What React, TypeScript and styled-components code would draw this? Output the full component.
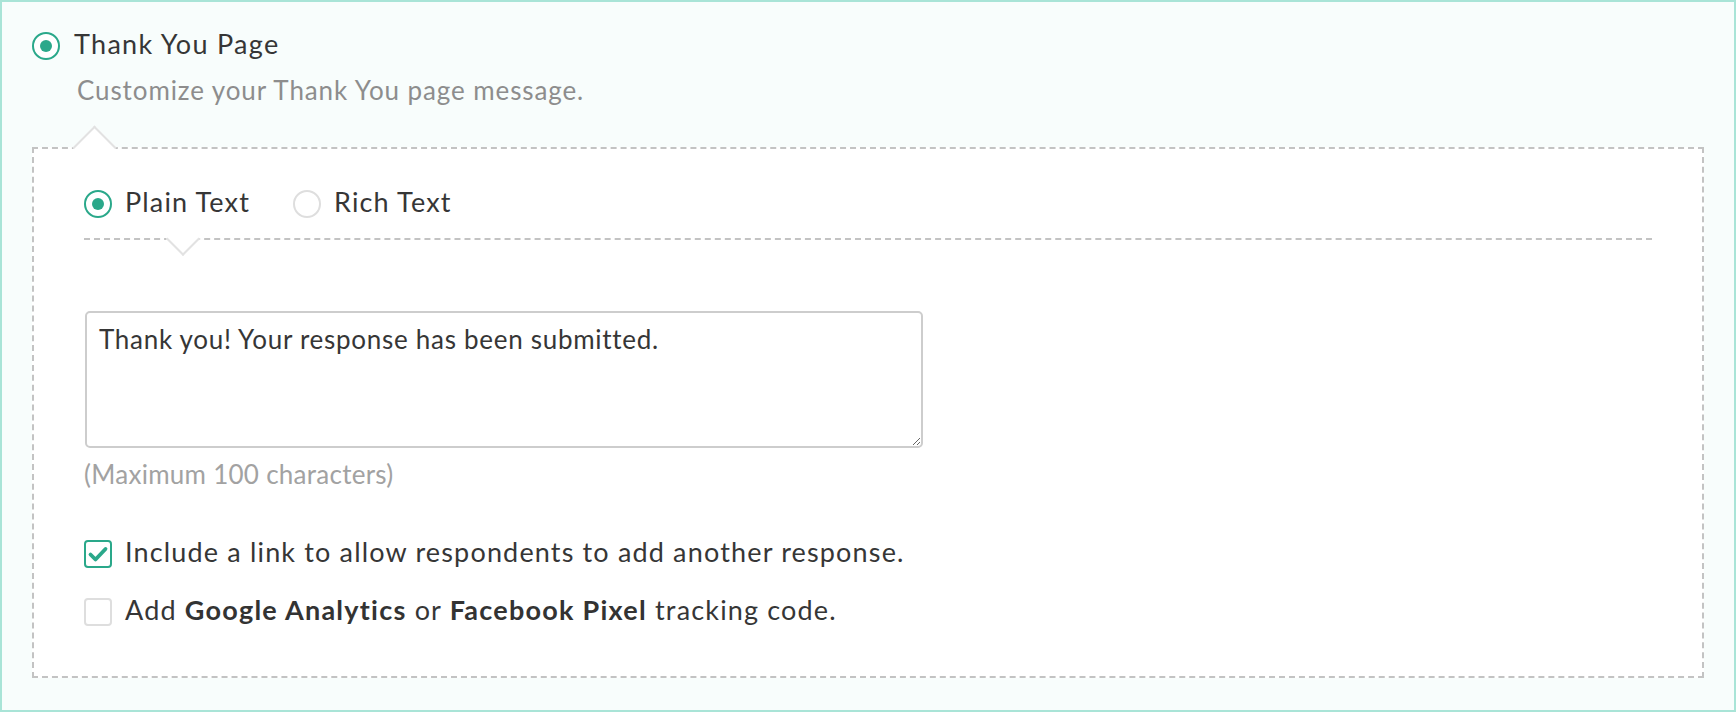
import React from "react";
import styled, { createGlobalStyle } from "styled-components";

const TEAL = "#2aa88a";
const TEXT = "#363636";

const Global = createGlobalStyle`
  html, body { margin: 0; padding: 0; background: #ffffff; }
  body { font-family: Lato, "Open Sans", sans-serif; color: ${TEXT}; }
  *, *::before, *::after { box-sizing: border-box; }
`;

const Panel = styled.section`
  width: 1736px;
  height: 712px;
  border: 2px solid #a9e4d7;
  background: #f8fdfc;
  padding: 30px 30px 30px 30px;
  display: flex;
  flex-direction: column;
`;

const OptionRow = styled.label<{ $gap?: number }>`
  display: inline-flex;
  align-items: center;
  gap: ${(p) => p.$gap ?? 13}px;
  height: 28px;
  cursor: pointer;
`;

const Label = styled.span<{ $spacing?: number }>`
  font-size: 27px;
  letter-spacing: ${(p) => p.$spacing ?? 1.16}px;
  line-height: 28px;
  padding-bottom: 4px;
  color: ${TEXT};
  white-space: nowrap;
  b { font-weight: 700; color: #333; letter-spacing: 1.25px; }
`;

const Radio = styled.span<{ $checked?: boolean }>`
  flex: none;
  width: 28px;
  height: 28px;
  border-radius: 50%;
  border: 2px solid ${(p) => (p.$checked ? TEAL : "#dedede")};
  background: #fff;
  display: inline-flex;
  align-items: center;
  justify-content: center;
  &::after {
    content: "";
    width: 12px;
    height: 12px;
    border-radius: 50%;
    background: ${(p) => (p.$checked ? TEAL : "transparent")};
  }
`;

const Subtitle = styled.p`
  margin: 14px 0 0 45px;
  font-size: 26px;
  letter-spacing: 0.9px;
  line-height: 32px;
  color: #8d8d8d;
`;

const DashedBox = styled.div`
  position: relative;
  margin-top: 41px;
  border: 2px dashed #c3c3c3;
  background: #ffffff;
  padding: 0 50px 50px;
`;

const UpNotch = styled.span`
  position: absolute;
  left: 45px;
  top: -17px;
  width: 31px;
  height: 31px;
  background: #ffffff;
  border-top: 2px solid #e2e2e2;
  border-left: 2px solid #e2e2e2;
  transform: rotate(45deg);
`;

const TabRow = styled.div`
  position: relative;
  display: flex;
  align-items: center;
  gap: 43px;
  padding: 41px 0 20px;
  border-bottom: 2px dashed #c3c3c3;
`;

const DownNotch = styled.span`
  position: absolute;
  left: 87px;
  top: calc(100% - 11px);
  width: 24px;
  height: 24px;
  background: #ffffff;
  border-right: 2px solid #e2e2e2;
  border-bottom: 2px solid #e2e2e2;
  transform: rotate(45deg);
`;

const Body = styled.div`
  padding-top: 71px;
  display: flex;
  flex-direction: column;
`;

const MessageInput = styled.textarea`
  width: 838px;
  height: 137px;
  margin: 0 0 0 1px;
  border: 2px solid #cdcdcd;
  border-radius: 5px;
  padding: 10px 12px;
  font-family: Lato, "Open Sans", sans-serif;
  font-size: 26px;
  letter-spacing: 0.72px;
  line-height: 32px;
  color: ${TEXT};
  background: #fff;
  outline: none;
  resize: both;
  display: block;
`;

const Hint = styled.div`
  margin-top: 10px;
  font-size: 26px;
  letter-spacing: 0.27px;
  line-height: 32px;
  color: #a2a2a2;
`;

const CheckList = styled.div`
  margin-top: 50px;
  display: flex;
  flex-direction: column;
  gap: 30px;
`;

const Box = styled.span<{ $checked?: boolean }>`
  flex: none;
  width: 28px;
  height: 28px;
  border-radius: 4px;
  border: 2px solid ${(p) => (p.$checked ? TEAL : "#dedede")};
  background: #fff;
  display: inline-flex;
  align-items: center;
  justify-content: center;
`;

const Check = () => (
  <svg width="24" height="24" viewBox="0 0 24 24" aria-hidden="true">
    <polyline
      points="4.5,12.5 9.5,17.5 19.5,7"
      fill="none"
      stroke={TEAL}
      strokeWidth="3.8"
      strokeLinecap="round"
      strokeLinejoin="round"
    />
  </svg>
);

export default function App() {
  return (
    <>
      <Global />
      <Panel>
        <OptionRow $gap={14}>
          <Radio $checked />
          <Label $spacing={1.3}>Thank You Page</Label>
        </OptionRow>
        <Subtitle>Customize your Thank You page message.</Subtitle>
        <DashedBox>
          <UpNotch />
          <TabRow>
            <OptionRow>
              <Radio $checked />
              <Label>Plain Text</Label>
            </OptionRow>
            <OptionRow>
              <Radio />
              <Label>Rich Text</Label>
            </OptionRow>
            <DownNotch />
          </TabRow>
          <Body>
            <MessageInput defaultValue="Thank you! Your response has been submitted." />
            <Hint>(Maximum 100 characters)</Hint>
            <CheckList>
              <OptionRow>
                <Box $checked>
                  <Check />
                </Box>
                <Label>Include a link to allow respondents to add another response.</Label>
              </OptionRow>
              <OptionRow>
                <Box />
                <Label>
                  Add <b>Google Analytics</b> or <b>Facebook Pixel</b> tracking code.
                </Label>
              </OptionRow>
            </CheckList>
          </Body>
        </DashedBox>
      </Panel>
    </>
  );
}
